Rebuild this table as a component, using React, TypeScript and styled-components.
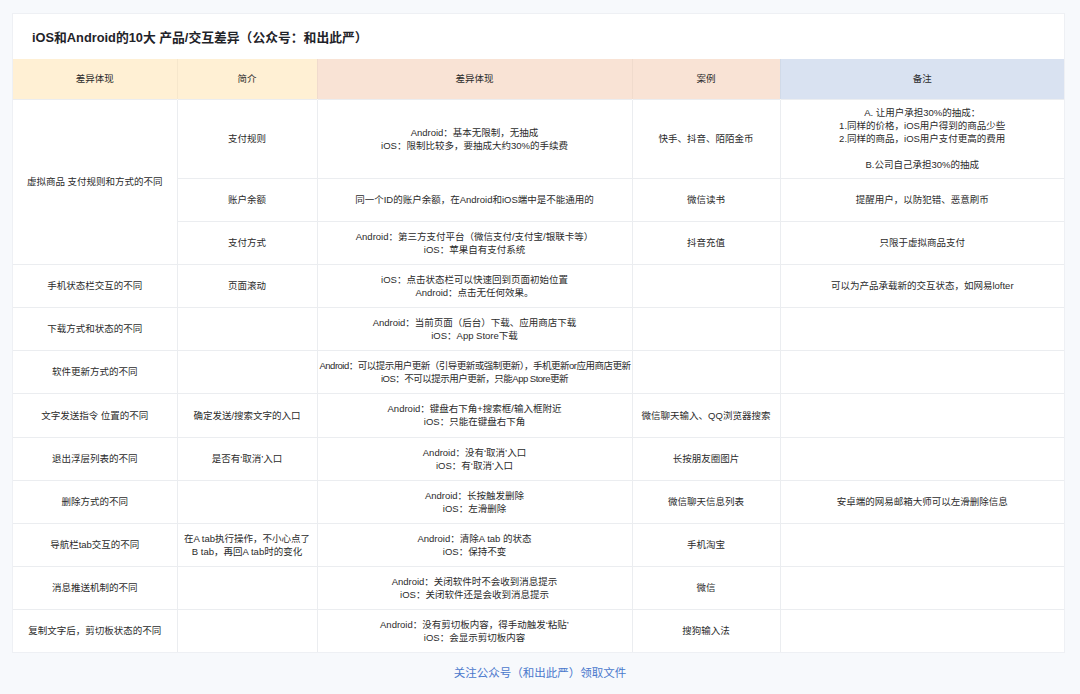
import React from "react";
import styled, { createGlobalStyle } from "styled-components";

const GlobalStyle = createGlobalStyle`
  html, body {
    margin: 0;
    padding: 0;
    background: #f7f9fc;
  }
  body {
    font-family: "Liberation Sans", "Noto Sans CJK SC", sans-serif;
    color: #262626;
  }
`;

const Page = styled.div`
  width: 1080px;
  height: 694px;
  overflow: hidden;
  padding: 14px 0 0 13px;
  box-sizing: border-box;
`;

const Card = styled.div`
  width: 1051px;
  height: 638px;
  background: #ffffff;
  overflow: hidden;
  box-shadow: 0 0 0 1px #eef0f4;
`;

const TitleBar = styled.div`
  height: 45px;
  display: flex;
  align-items: center;
  padding-left: 19px;
  font-size: 12.8px;
  font-weight: 700;
  color: #1f2329;
`;

const Table = styled.table`
  width: 1051px;
  table-layout: fixed;
  border-collapse: collapse;
  font-size: 9.5px;
  line-height: 13px;
  color: #2b2b2b;
`;

type Tone = "yellow" | "peach" | "blue";
const toneColor: Record<Tone, string> = {
  yellow: "#fff0d4",
  peach: "#f9e3d5",
  blue: "#d9e2f1",
};

const HeadRow = styled.tr`
  height: 40px;
`;

const HeadCell = styled.th<{ $tone: Tone }>`
  background: ${(p) => toneColor[p.$tone]};
  font-weight: 400;
  text-align: center;
  vertical-align: middle;
  color: #2b2b2b;
  border-left: 1px solid rgba(0, 0, 0, 0.035);
  padding: 0;
  &:first-child {
    border-left: none;
  }
`;

const BodyRow = styled.tr<{ $h: number }>`
  height: ${(p) => p.$h}px;
`;

const Cell = styled.td`
  border: 1px solid #ebedf0;
  text-align: center;
  vertical-align: middle;
  padding: 0 2px;
  white-space: nowrap;
  &:first-child {
    border-left: none;
  }
  &:last-child {
    border-right: none;
  }
`;

const Line = styled.div<{ $tight?: boolean }>`
  min-height: 13px;
  letter-spacing: ${(p) => (p.$tight ? "-0.5px" : "0")};
`;

const Footer = styled.div`
  text-align: center;
  padding-top: 13px;
  margin-left: -13px;
  font-size: 11.5px;
  line-height: 16px;
  color: #4a78cc;
`;

type Txt = string | string[];

interface Row {
  c1?: Txt;
  span?: number;
  c2?: Txt;
  c3?: Txt;
  c4?: Txt;
  c5?: Txt;
  h: number;
  skipC1?: boolean;
  tight?: boolean;
}

const rows: Row[] = [
  {
    c1: "虚拟商品 支付规则和方式的不同",
    span: 3,
    c2: "支付规则",
    c3: ["Android：基本无限制，无抽成", "iOS：限制比较多，要抽成大约30%的手续费"],
    c4: "快手、抖音、陌陌金币",
    c5: [
      "A. 让用户承担30%的抽成：",
      "1.同样的价格，iOS用户得到的商品少些",
      "2.同样的商品，iOS用户支付更高的费用",
      "",
      "B.公司自己承担30%的抽成",
    ],
    h: 79,
  },
  {
    skipC1: true,
    c2: "账户余额",
    c3: "同一个ID的账户余额，在Android和iOS端中是不能通用的",
    c4: "微信读书",
    c5: "提醒用户，以防犯错、恶意刷币",
    h: 43,
  },
  {
    skipC1: true,
    c2: "支付方式",
    c3: ["Android：第三方支付平台（微信支付/支付宝/银联卡等）", "iOS：苹果自有支付系统"],
    c4: "抖音充值",
    c5: "只限于虚拟商品支付",
    h: 43,
  },
  {
    c1: "手机状态栏交互的不同",
    c2: "页面滚动",
    c3: ["iOS：点击状态栏可以快速回到页面初始位置", "Android：点击无任何效果。"],
    c5: "可以为产品承载新的交互状态，如网易lofter",
    h: 43,
  },
  {
    c1: "下载方式和状态的不同",
    c3: ["Android：当前页面（后台）下载、应用商店下载", "iOS：App Store下载"],
    h: 43,
  },
  {
    c1: "软件更新方式的不同",
    c3: [
      "Android：可以提示用户更新（引导更新或强制更新），手机更新or应用商店更新",
      "iOS：不可以提示用户更新，只能App Store更新",
    ],
    tight: true,
    h: 43,
  },
  {
    c1: "文字发送指令 位置的不同",
    c2: "确定发送/搜索文字的入口",
    c3: ["Android：键盘右下角+搜索框/输入框附近", "iOS：只能在键盘右下角"],
    c4: "微信聊天输入、QQ浏览器搜索",
    h: 44,
  },
  {
    c1: "退出浮层列表的不同",
    c2: "是否有‘取消’入口",
    c3: ["Android：没有‘取消’入口", "iOS：有‘取消’入口"],
    c4: "长按朋友圈图片",
    h: 43,
  },
  {
    c1: "删除方式的不同",
    c3: ["Android：长按触发删除", "iOS：左滑删除"],
    c4: "微信聊天信息列表",
    c5: "安卓端的网易邮箱大师可以左滑删除信息",
    h: 43,
  },
  {
    c1: "导航栏tab交互的不同",
    c2: ["在A tab执行操作，不小心点了", "B tab，再回A tab时的变化"],
    c3: ["Android：清除A tab 的状态", "iOS：保持不变"],
    c4: "手机淘宝",
    h: 43,
  },
  {
    c1: "消息推送机制的不同",
    c3: ["Android：关闭软件时不会收到消息提示", "iOS：关闭软件还是会收到消息提示"],
    c4: "微信",
    h: 43,
  },
  {
    c1: "复制文字后，剪切板状态的不同",
    c3: ["Android：没有剪切板内容，得手动触发‘粘贴’", "iOS：会显示剪切板内容"],
    c4: "搜狗输入法",
    h: 43,
  },
];

const Content: React.FC<{ value?: Txt; tight?: boolean }> = ({ value, tight }) => {
  if (value === undefined) return null;
  const lines = Array.isArray(value) ? value : [value];
  return (
    <>
      {lines.map((l, i) => (
        <Line key={i} $tight={tight}>
          {l}
        </Line>
      ))}
    </>
  );
};

export default function App() {
  return (
    <>
      <GlobalStyle />
      <Page>
        <Card>
          <TitleBar>iOS和Android的10大 产品/交互差异（公众号：和出此严）</TitleBar>
          <Table>
            <colgroup>
              <col style={{ width: 164 }} />
              <col style={{ width: 140 }} />
              <col style={{ width: 315 }} />
              <col style={{ width: 148 }} />
              <col style={{ width: 284 }} />
            </colgroup>
            <thead>
              <HeadRow>
                <HeadCell $tone="yellow">差异体现</HeadCell>
                <HeadCell $tone="yellow">简介</HeadCell>
                <HeadCell $tone="peach">差异体现</HeadCell>
                <HeadCell $tone="peach">案例</HeadCell>
                <HeadCell $tone="blue">备注</HeadCell>
              </HeadRow>
            </thead>
            <tbody>
              {rows.map((r, i) => (
                <BodyRow key={i} $h={r.h}>
                  {!r.skipC1 && (
                    <Cell rowSpan={r.span ?? 1}>
                      <Content value={r.c1} />
                    </Cell>
                  )}
                  <Cell>
                    <Content value={r.c2} />
                  </Cell>
                  <Cell>
                    <Content value={r.c3} tight={r.tight} />
                  </Cell>
                  <Cell>
                    <Content value={r.c4} />
                  </Cell>
                  <Cell>
                    <Content value={r.c5} />
                  </Cell>
                </BodyRow>
              ))}
            </tbody>
          </Table>
        </Card>
        <Footer>关注公众号（和出此严）领取文件</Footer>
      </Page>
    </>
  );
}
